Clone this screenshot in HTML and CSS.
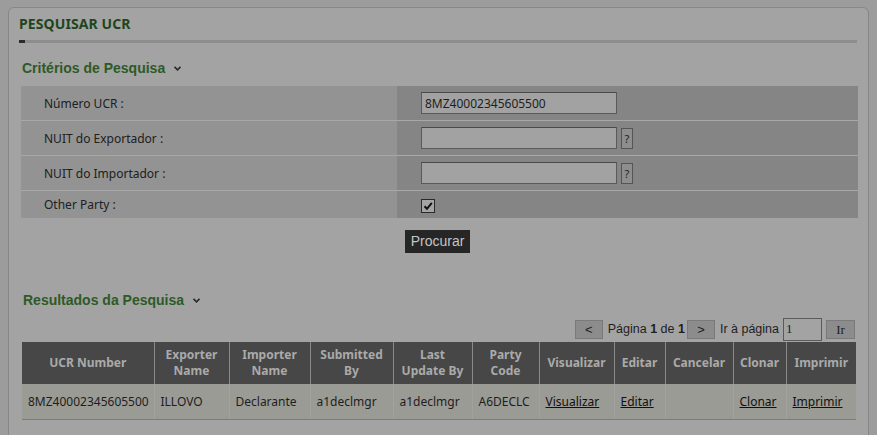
FILE: index.html
```html
<!DOCTYPE html>
<html lang="pt">
<head>
    <meta charset="UTF-8">
    <title>Pesquisar UCR</title>
    <link rel="stylesheet" href="styles.css">
</head>
<body>

    <div class="panel">
        <h1 class="page-title">PESQUISAR UCR</h1>
        <div class="title-rule"><span></span></div>

        <h2 class="section-title">Critérios de Pesquisa
            <svg class="chevron" width="7" height="5" viewBox="0 0 7 5"><path d="M0.5 0.8 L3.5 3.8 L6.5 0.8" fill="none" stroke="#2a2a2a" stroke-width="1.6"/></svg>
        </h2>

        <table class="criteria">
            <tr>
                <td class="label">Número UCR :</td>
                <td class="field"><input type="text" class="text-input" value="8MZ40002345605500"></td>
            </tr>
            <tr>
                <td class="label">NUIT do Exportador :</td>
                <td class="field"><input type="text" class="text-input"><span class="help-btn">?</span></td>
            </tr>
            <tr>
                <td class="label">NUIT do Importador :</td>
                <td class="field"><input type="text" class="text-input"><span class="help-btn">?</span></td>
            </tr>
            <tr class="last">
                <td class="label">Other Party :</td>
                <td class="field">
                    <span class="check">
                        <svg width="12" height="12" viewBox="0 0 12 12"><path d="M2.5 6.2 L5 8.8 L9.8 2.8" fill="none" stroke="#111" stroke-width="2"/></svg>
                    </span>
                </td>
            </tr>
        </table>

        <div class="actions">
            <button class="btn-search">Procurar</button>
        </div>

        <h2 class="section-title results-title">Resultados da Pesquisa
            <svg class="chevron" width="7" height="5" viewBox="0 0 7 5"><path d="M0.5 0.8 L3.5 3.8 L6.5 0.8" fill="none" stroke="#2a2a2a" stroke-width="1.6"/></svg>
        </h2>

        <div class="pager">
            <button class="pager-btn arrow">&lt;</button>
            <span class="pager-text">Página <b>1</b> de <b>1</b></span>
            <button class="pager-btn arrow">&gt;</button>
            <span class="pager-text goto">Ir à página</span>
            <input type="text" class="page-input" value="1">
            <button class="pager-btn go">Ir</button>
        </div>

        <table class="results">
            <colgroup>
                <col style="width:132px">
                <col style="width:75px">
                <col style="width:81px">
                <col style="width:83px">
                <col style="width:79px">
                <col style="width:67px">
                <col style="width:75px">
                <col style="width:51px">
                <col style="width:68px">
                <col style="width:53px">
                <col style="width:70px">
            </colgroup>
            <thead>
                <tr>
                    <th>UCR Number</th>
                    <th>Exporter<br>Name</th>
                    <th>Importer<br>Name</th>
                    <th>Submitted<br>By</th>
                    <th>Last<br>Update By</th>
                    <th>Party<br>Code</th>
                    <th>Visualizar</th>
                    <th>Editar</th>
                    <th>Cancelar</th>
                    <th>Clonar</th>
                    <th>Imprimir</th>
                </tr>
            </thead>
            <tbody>
                <tr>
                    <td>8MZ40002345605500</td>
                    <td>ILLOVO</td>
                    <td>Declarante</td>
                    <td>a1declmgr</td>
                    <td>a1declmgr</td>
                    <td>A6DECLC</td>
                    <td><a href="#">Visualizar</a></td>
                    <td><a href="#">Editar</a></td>
                    <td></td>
                    <td><a href="#">Clonar</a></td>
                    <td><a href="#">Imprimir</a></td>
                </tr>
            </tbody>
        </table>
    </div>

</body>
</html>
```

FILE: styles.css
```css
body {
    margin: 0;
    background: #9c9c9c;
    font-family: "Noto Sans", Tahoma, sans-serif;
    font-size: 12px;
    color: #1e1e1e;
}

.panel {
    margin: 7px 8px 0;
    width: 861px;
    min-height: 440px;
    box-sizing: border-box;
    border: 1px solid #878787;
    border-radius: 6px;
    background: #a3a3a3;
    padding: 7px 11px 14px 10px;
}

.page-title {
    margin: 0;
    font-size: 14px;
    line-height: 18px;
    letter-spacing: 0.1px;
    color: #1d461d;
}

.title-rule {
    margin-top: 7px;
    height: 3px;
    background: #8d8d8d;
}

.title-rule span {
    display: block;
    width: 6px;
    height: 3px;
    background: #2b2b2b;
}

.section-title {
    margin: 17px 0 9px;
    padding-left: 3px;
    font-family: "Liberation Sans", Arial, sans-serif;
    font-size: 14px;
    line-height: 17px;
    color: #2d5a26;
}

.chevron {
    margin-left: 5px;
    vertical-align: 2px;
}

.criteria {
    margin-left: 2px;
    width: 837px;
    border-collapse: collapse;
}

.criteria td {
    height: 34px;
    padding: 0;
    border-bottom: 1px solid #a8a8a8;
}

.criteria tr.last td {
    height: 27px;
    border-bottom: none;
}

.criteria .label {
    width: 353px;
    padding-left: 23px;
    background: #939393;
    color: #202020;
}

.criteria .field {
    padding-left: 24px;
    background: #858585;
}

.text-input {
    width: 196px;
    height: 22px;
    box-sizing: border-box;
    margin: 0;
    padding: 0 3px;
    border: 1px solid #5a5a5a;
    border-top-color: #4a4a4a;
    background: #a2a2a2;
    font-family: "Noto Sans", Tahoma, sans-serif;
    font-size: 12px;
    color: #1e1e1e;
    vertical-align: middle;
}

.help-btn {
    display: inline-block;
    width: 12px;
    height: 21px;
    box-sizing: border-box;
    margin-left: 4px;
    border: 1px solid #555;
    background: #8e8e8e;
    font-size: 11px;
    line-height: 19px;
    text-align: center;
    color: #222;
    vertical-align: middle;
}

.check {
    display: inline-block;
    width: 14px;
    height: 14px;
    box-sizing: border-box;
    border: 1px solid #2a2a2a;
    background: #a4a4a4;
    vertical-align: middle;
}

.check svg {
    display: block;
}

.actions {
    margin-top: 12px;
    text-align: center;
}

.btn-search {
    height: 23px;
    margin-left: -1px;
    padding: 0 6px;
    border: none;
    background: #262626;
    color: #c4c4c4;
    font-family: "Liberation Sans", Arial, sans-serif;
    font-size: 14px;
    line-height: 23px;
}

.results-title {
    margin: 39px 0 9px;
    padding-left: 4px;
}

.pager {
    display: flex;
    justify-content: flex-end;
    align-items: center;
    height: 22px;
    padding-right: 2px;
    font-family: "Liberation Sans", Arial, sans-serif;
    font-size: 12.5px;
    color: #1e1e1e;
}

.pager-btn {
    height: 19px;
    box-sizing: border-box;
    padding: 0;
    border: 1px solid #7a7a7a;
    background: #8c8c8c;
    font-family: "Liberation Serif", "Times New Roman", serif;
    font-size: 13px;
    line-height: 17px;
    color: #1e1e1e;
}

.pager-btn.arrow {
    width: 28px;
    font-family: "Liberation Sans", Arial, sans-serif;
}

.pager-text {
    margin: 0 2px 0 5px;
}

.pager-text.goto {
    margin: 0 4px 0 5px;
}

.page-input {
    width: 39px;
    height: 23px;
    box-sizing: border-box;
    margin: 0 4px 0 0;
    padding: 0 2px;
    border: 1px solid #5a5a5a;
    background: #a3a3a3;
    font-family: "Liberation Serif", "Times New Roman", serif;
    font-size: 13px;
    color: #1e1e1e;
}

.pager-btn.go {
    width: 29px;
}

.results {
    margin: 2px 0 0 3px;
    width: 834px;
    table-layout: fixed;
    border-collapse: collapse;
}

.results th {
    height: 42px;
    padding: 0 2px;
    background: #474747;
    border-left: 1px solid #8a8a8a;
    color: #aaaaaa;
    font-size: 12px;
    line-height: 16px;
    font-weight: bold;
    text-align: center;
}

.results th:first-child {
    border-left: none;
}

.results td {
    height: 35px;
    padding: 0 0 0 6px;
    background: #9b9b95;
    border-left: 1px solid #a2a29d;
    border-bottom: 1px solid #7b7b7b;
    white-space: nowrap;
    color: #1e1e1e;
}

.results td:first-child {
    border-left: none;
}

.results a {
    color: #111;
}
```
